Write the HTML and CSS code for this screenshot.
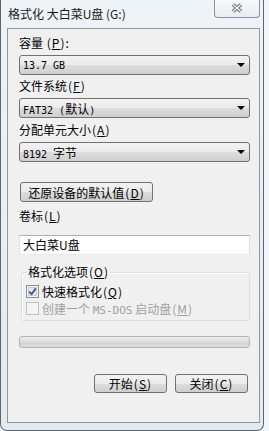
FILE: index.html
```
<!DOCTYPE html>
<html lang="zh-CN">
<head>
    <meta charset="UTF-8">
    <title>格式化 大白菜U盘 (G:)</title>
    <link rel="stylesheet" href="styles.css">
</head>
<body>
    <div class="window">
        <div class="titlebar">
            <span class="title">格式化 大白菜U盘 (G:)</span>
            <div class="close-btn">
                <svg width="12" height="10" viewBox="0 0 12 10">
                    <path d="M2 1.5 L10 8.5 M10 1.5 L2 8.5" stroke="#5d6670" stroke-width="3.6" fill="none"/>
                    <path d="M2 1.5 L10 8.5 M10 1.5 L2 8.5" stroke="#f4f6f8" stroke-width="1.6" fill="none"/>
                </svg>
            </div>
        </div>
        <div class="client">
            <div class="label">容量 <span class="key">(<u>P</u>)</span>:</div>
            <div class="combo"><span class="mono">13.7 GB</span><span class="arrow"></span></div>

            <div class="label">文件系统<span class="key">(<u>F</u>)</span></div>
            <div class="combo"><span class="mono">FAT32 (<span class="cjk">默认</span>)</span><span class="arrow"></span></div>

            <div class="label label-gap">分配单元大小<span class="key">(<u>A</u>)</span></div>
            <div class="combo"><span class="mono">8192 <span class="cjk">字节</span></span><span class="arrow"></span></div>

            <div class="btn btn-reset">还原设备的默认值<span class="key">(<u>D</u>)</span></div>

            <div class="label label-vol">卷标<span class="key">(<u>L</u>)</span></div>
            <div class="textbox">大白菜U盘</div>

            <fieldset class="group">
                <legend>格式化选项<span class="key">(<u>O</u>)</span></legend>
                <div class="check-row">
                    <svg width="13" height="13" viewBox="0 0 13 13">
                        <rect x="0.5" y="0.5" width="12" height="12" fill="#f6f6f6" stroke="#8e8f8f"/>
                        <rect x="2.5" y="2.5" width="8" height="8" fill="#e4e6e8" stroke="#c9ccd0"/>
                        <path d="M3.2 6.6 L5.6 9.2 L9.8 3.4" stroke="#3f5590" stroke-width="1.8" fill="none"/>
                    </svg>
                    <span>快速格式化<span class="key">(<u>Q</u>)</span></span>
                </div>
                <div class="check-row disabled">
                    <svg width="13" height="13" viewBox="0 0 13 13">
                        <rect x="0.5" y="0.5" width="12" height="12" fill="#f4f4f4" stroke="#c2c2c2"/>
                    </svg>
                    <span>创建一个 <span class="mono mono-lg">MS-DOS</span> 启动盘<span class="key">(<u>M</u>)</span></span>
                </div>
            </fieldset>

            <div class="progress"></div>

            <div class="actions">
                <div class="btn btn-action">开始<span class="key">(<u>S</u>)</span></div>
                <div class="btn btn-action">关闭<span class="key">(<u>C</u>)</span></div>
            </div>
        </div>
    </div>
</body>
</html>
```

FILE: styles.css
```
* {
    margin: 0;
    padding: 0;
    box-sizing: border-box;
}
body {
    background: #f3f6f9;
    font-family: "Noto Sans CJK SC", "Liberation Sans", sans-serif;
    font-size: 12px;
    color: #000;
}
u {
    text-decoration: underline;
}
.key {
    margin-left: 1px;
    letter-spacing: 1px;
}
.mono {
    font-family: "DejaVu Sans Mono", "Noto Sans CJK SC", monospace;
    font-size: 10px;
}
.mono-lg {
    font-size: 11px;
}
.cjk {
    font-family: "Noto Sans CJK SC", sans-serif;
    font-size: 12px;
}
.window {
    width: 264px;
    height: 431px;
    background: linear-gradient(180deg, #eef3f7, #e3eaf0);
    border: 1px solid #5c6670;
    border-top: none;
    border-radius: 0 0 7px 7px;
    padding: 0 3px 7px 6px;
    display: flex;
    flex-direction: column;
}
.titlebar {
    height: 28px;
    display: flex;
    align-items: flex-start;
}
.title {
    padding: 6px 0 0 1px;
    line-height: 16px;
    color: #1a1a1a;
}
.close-btn {
    margin-left: auto;
    margin-top: -1px;
    width: 46px;
    height: 19px;
    border: 1px solid #8a939c;
    border-top: none;
    border-radius: 0 0 4px 4px;
    background: linear-gradient(#f8fafc, #e8edf1);
    display: flex;
    align-items: center;
    justify-content: center;
}
.client {
    height: 395px;
    border: 1px solid #8e99a4;
    background: #f0f0f0;
    padding: 6px 9px 0 11px;
}
.label {
    line-height: 16px;
    margin-bottom: 4px;
    margin-top: 3px;
}
.label:first-child {
    margin-top: 0;
}
.label-gap {
    margin-top: 4px;
}
.combo {
    height: 20px;
    border: 1px solid #707070;
    border-radius: 3px;
    background: linear-gradient(#f2f2f2 0%, #ebebeb 50%, #dddddd 50%, #cfcfcf 100%);
    display: flex;
    align-items: center;
    justify-content: space-between;
    padding: 0 4px 0 3px;
}
.arrow {
    width: 0;
    height: 0;
    border-left: 4px solid transparent;
    border-right: 4px solid transparent;
    border-top: 4px solid #000;
}
.btn {
    height: 20px;
    border: 1px solid #707070;
    border-radius: 3px;
    background: linear-gradient(#f2f2f2 0%, #ebebeb 50%, #dddddd 50%, #cfcfcf 100%);
    display: flex;
    align-items: center;
    justify-content: center;
}
.btn-reset {
    width: 133px;
    margin: 20px 0 0 1px;
}
.label-vol {
    margin-top: 6px;
    margin-bottom: 11px;
}
.textbox {
    height: 20px;
    border: 1px solid #abadb3;
    border-color: #abadb3 #dbdfe6 #e3e9ef #e2e3ea;
    background: #fff;
    padding: 0 3px;
    line-height: 18px;
}
.group {
    margin: 9px 0 0 2px;
    border: 1px solid #d5dfe5;
    border-radius: 3px;
    padding: 3px 0 3px 4px;
    box-shadow: inset 1px 1px 0 #fff;
}
.group legend {
    margin-left: 1px;
    padding: 0 1px;
    line-height: 16px;
}
.check-row {
    height: 17px;
    display: flex;
    align-items: center;
    gap: 3px;
}
.check-row.disabled {
    color: #a0a0a0;
}
.progress {
    height: 12px;
    margin-top: 15px;
    border: 1px solid #b4b4b4;
    border-radius: 3px;
    background: linear-gradient(#ececec, #dedede 45%, #d4d4d4 60%, #dcdcdc);
}
.actions {
    display: flex;
    justify-content: flex-end;
    gap: 8px;
    margin-top: 26px;
    padding-right: 2px;
}
.btn-action {
    width: 73px;
    height: 19px;
}
```
